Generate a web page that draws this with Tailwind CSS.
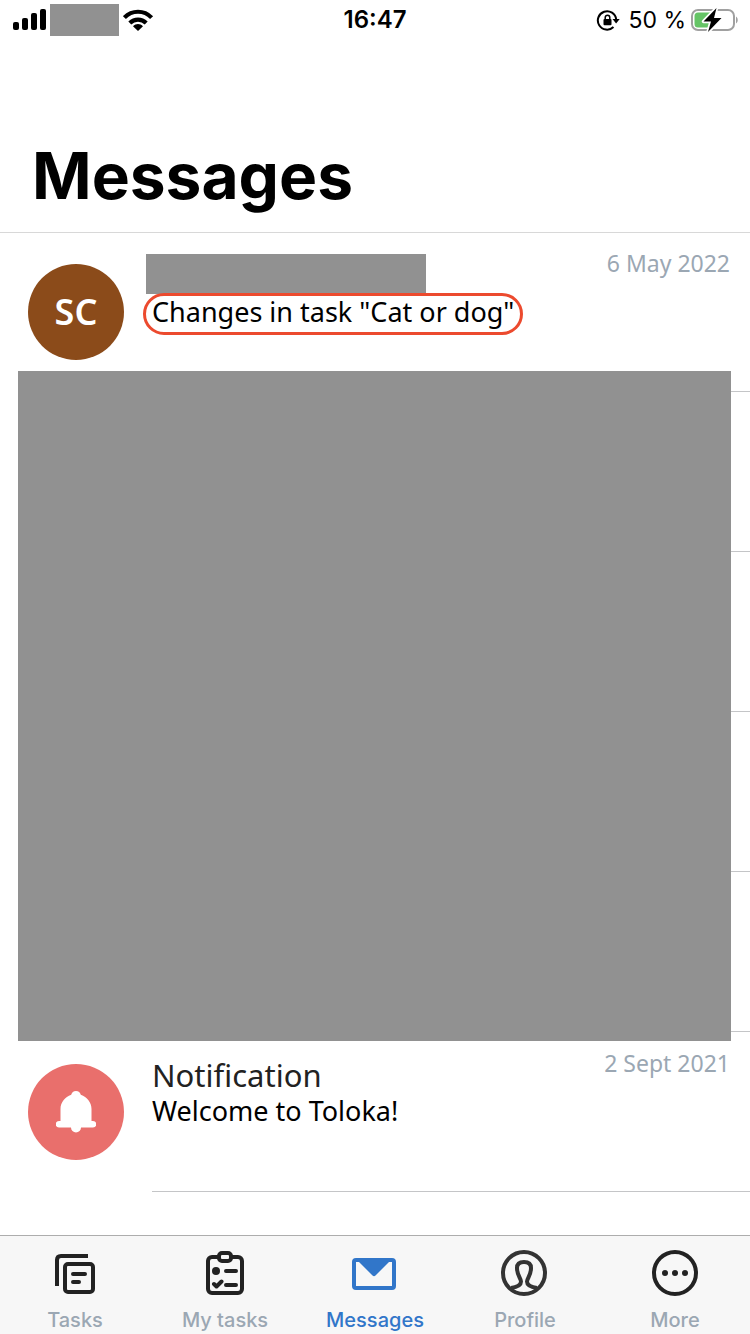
<!DOCTYPE html>
<html lang="en">
<head>
<meta charset="utf-8">
<meta name="viewport" content="width=device-width, initial-scale=1">
<title>Messages</title>
<script src="https://cdn.jsdelivr.net/npm/@tailwindcss/browser@4"></script>
</head>
<body class="flex min-h-screen flex-col bg-white font-['Noto_Sans',sans-serif] text-black">
  <header class="-mb-px border-b border-[#d8d8d8] font-['Inter',sans-serif]">
    <div class="grid h-10 grid-cols-[1fr_auto_1fr] items-center px-3">
      <div class="flex items-center">
        <svg class="h-6 w-9" viewBox="0 0 36 24" aria-label="Signal">
          <rect x="1" y="14" width="6" height="8" rx="2"/><rect x="10" y="10" width="6" height="12" rx="2"/><rect x="19" y="5" width="6" height="17" rx="2"/><rect x="28" y="1" width="6" height="21" rx="2"/>
        </svg>
        <span class="ml-0.5 block h-8 w-[69px] bg-[#919191]"></span>
        <svg class="ml-1 h-6 w-8" viewBox="0 0 32 24" aria-label="Wi-Fi">
          <g fill="none" stroke="#000" stroke-width="4.2"><path d="M1.400 9.600C9 1.800 21 1.800 28.600 9.600"/><path d="M6.800 15C11.500 10.400 18.500 10.400 23.200 15"/></g>
          <path d="M10 18.200c2.800-2.800 7.200-2.800 10 0L15 23z"/>
        </svg>
      </div>
      <time class="text-[24px] leading-8 font-semibold">16:47</time>
      <div class="flex items-center justify-end">
        <svg class="mr-2 h-6 w-6" viewBox="0 0 24 24" aria-label="Rotation lock">
          <path d="M17.500 19A9.200 9.200 0 1 1 20.200 11.500" fill="none" stroke="#000" stroke-width="2"/>
          <path d="M16.500 11h7.200L20.100 15.600z"/>
          <rect x="7.500" y="11" width="8" height="6.200" rx="1"/><path d="M9.200 11V9.500a2.300 2.300 0 0 1 4.600 0V11" fill="none" stroke="#000" stroke-width="1.500"/>
        </svg>
        <span class="mr-1 text-[23px] leading-8">50 %</span>
        <svg class="h-7 w-12 shrink-0" viewBox="0 0 48 28" aria-label="Battery charging">
          <rect x="2" y="4" width="42" height="20" rx="6" fill="#fff" stroke="#a0a0a0" stroke-width="2"/>
          <path d="M8 6.500h14v15H8a3.500 3.500 0 0 1-3.500-3.500v-8A3.500 3.500 0 0 1 8 6.500z" fill="#65c466"/>
          <path d="M46 10.500c2.300 1.500 2.300 5.500 0 7z" fill="#a0a0a0"/>
          <path d="M26.500 2 13.500 15.500h7.500L18 26 31.500 12h-7.500z" fill="#000" stroke="#fff" stroke-width="3.500" paint-order="stroke" stroke-linejoin="round"/>
        </svg>
      </div>
    </div>
    <h1 class="px-8 pt-24 pb-4 text-[64px] leading-20 font-bold">Messages</h1>
  </header>

  <main class="flex-1">
    <ul class="relative">
      <li class="flex h-40 gap-7 pl-7">
        <span class="mt-8 flex size-24 shrink-0 items-center justify-center rounded-full bg-[#8b4b1a] text-[36px] font-semibold text-white">SC</span>
        <div class="flex flex-1 items-start justify-between border-b border-[#c4c5c7] pr-5">
          <div class="-ml-2 pt-[22px]">
            <span class="ml-0.5 block h-10 w-[280px] bg-[#919191]"></span>
            <a href="#" class="-mt-px -ml-px block rounded-full border-3 border-[#ec4a2e] bg-white px-1.5 pb-1 text-[27px] leading-8 whitespace-nowrap">Changes in task "Cat or dog"</a>
          </div>
          <time class="pt-[17px] text-[23px] leading-7 text-[#9ba7b3]">6 May 2022</time>
        </div>
      </li>
      <li class="h-40 pl-[152px]"><div class="h-full border-b border-[#c4c5c7]"></div></li>
      <li class="h-40 pl-[152px]"><div class="h-full border-b border-[#c4c5c7]"></div></li>
      <li class="h-40 pl-[152px]"><div class="h-full border-b border-[#c4c5c7]"></div></li>
      <li class="h-40 pl-[152px]"><div class="h-full border-b border-[#c4c5c7]"></div></li>
      <li class="flex h-40 gap-7 pl-7">
        <span class="mt-8 flex size-24 shrink-0 items-center justify-center rounded-full bg-[#e96f6c]">
          <svg class="h-11 w-10" viewBox="0 0 40 44" fill="#fff" aria-hidden="true">
            <path d="M20 1a5 5 0 0 1 4.800 3.800C31 6.800 35.500 12.500 35.500 19v12H37a3 3 0 0 1 0 6.500H25a5 5 0 0 1-10 0H3A3 3 0 0 1 3 31h1.500V19C4.500 12.500 9 6.800 15.200 4.800A5 5 0 0 1 20 1z"/>
          </svg>
        </span>
        <div class="flex flex-1 items-start justify-between border-b border-[#c4c5c7] pr-5">
          <a href="#" class="block pt-[25px]">
            <h2 class="text-[31px] leading-9 text-[#222]">Notification</h2>
            <p class="text-[27px] leading-9">Welcome to Toloka!</p>
          </a>
          <time class="pt-[17px] text-[23px] leading-7 text-[#9ba7b3]">2 Sept 2021</time>
        </div>
      </li>
      <li class="absolute top-[139px] right-[19px] left-[18px] h-[670px] bg-[#919191]" aria-hidden="true"></li>
    </ul>
  </main>

  <nav class="grid grid-cols-5 border-t border-[#adadad] bg-[#f7f7f7] pt-3 pb-0.5 font-['Inter',sans-serif] text-[20px] font-medium text-[#9ba7b3]">
    <a href="#" class="flex flex-col items-center gap-3 leading-6">
      <svg class="h-12 w-12" viewBox="0 0 48 48" fill="none" stroke="#222" stroke-width="4" stroke-linecap="round" aria-hidden="true">
        <path d="M6 38V12q0-4 4-4h27" stroke-linecap="butt"/><rect x="14" y="16" width="28" height="28" rx="3"/><path d="M22 26h12M22 34h6"/>
      </svg>
      Tasks
    </a>
    <a href="#" class="flex flex-col items-center gap-3 leading-6">
      <svg class="h-12 w-12" viewBox="0 0 48 48" fill="none" stroke="#222" stroke-width="4" stroke-linecap="round" stroke-linejoin="round" aria-hidden="true">
        <rect x="7" y="9" width="34" height="36" rx="4"/><rect x="18" y="5" width="12" height="8" rx="3" fill="#f7f7f7"/><circle cx="15" cy="23" r="4" fill="#222" stroke="none"/><path d="M25 23h10M25 37h10M13 36l2.500 2.500 5-5"/>
      </svg>
      My tasks
    </a>
    <a href="#" class="flex flex-col items-center gap-3 leading-6 text-[#3176c9]" aria-current="page">
      <svg class="h-12 w-12" viewBox="1 0 48 48" aria-hidden="true">
        <rect x="4" y="12" width="40" height="28" rx="2" fill="#f7f7f7" stroke="#3176c9" stroke-width="4"/>
        <path d="M8 13 22.500 27.500q1.500 1.500 3 0L40 13z" fill="#3176c9"/>
      </svg>
      Messages
    </a>
    <a href="#" class="flex flex-col items-center gap-3 leading-6">
      <svg class="h-12 w-12" viewBox="1 0 48 48" fill="none" stroke="#333" stroke-width="4" aria-hidden="true">
        <circle cx="24" cy="25" r="21"/><path d="M11 40c7-1 10-3 10-6.500 0-3-4-6-4-13.500 0-4.500 3-6 7-6s7 1.500 7 6c0 7.500-4 10.500-4 13.500 0 3.500 3 5.500 10 6.500"/>
      </svg>
      Profile
    </a>
    <a href="#" class="flex flex-col items-center gap-3 leading-6">
      <svg class="h-12 w-12" viewBox="1 0 48 48" aria-hidden="true">
        <circle cx="25" cy="25" r="21" fill="none" stroke="#222" stroke-width="4"/><g fill="#222"><circle cx="15" cy="25" r="3"/><circle cx="25" cy="25" r="3"/><circle cx="35" cy="25" r="3"/></g>
      </svg>
      More
    </a>
  </nav>
</body>
</html>
